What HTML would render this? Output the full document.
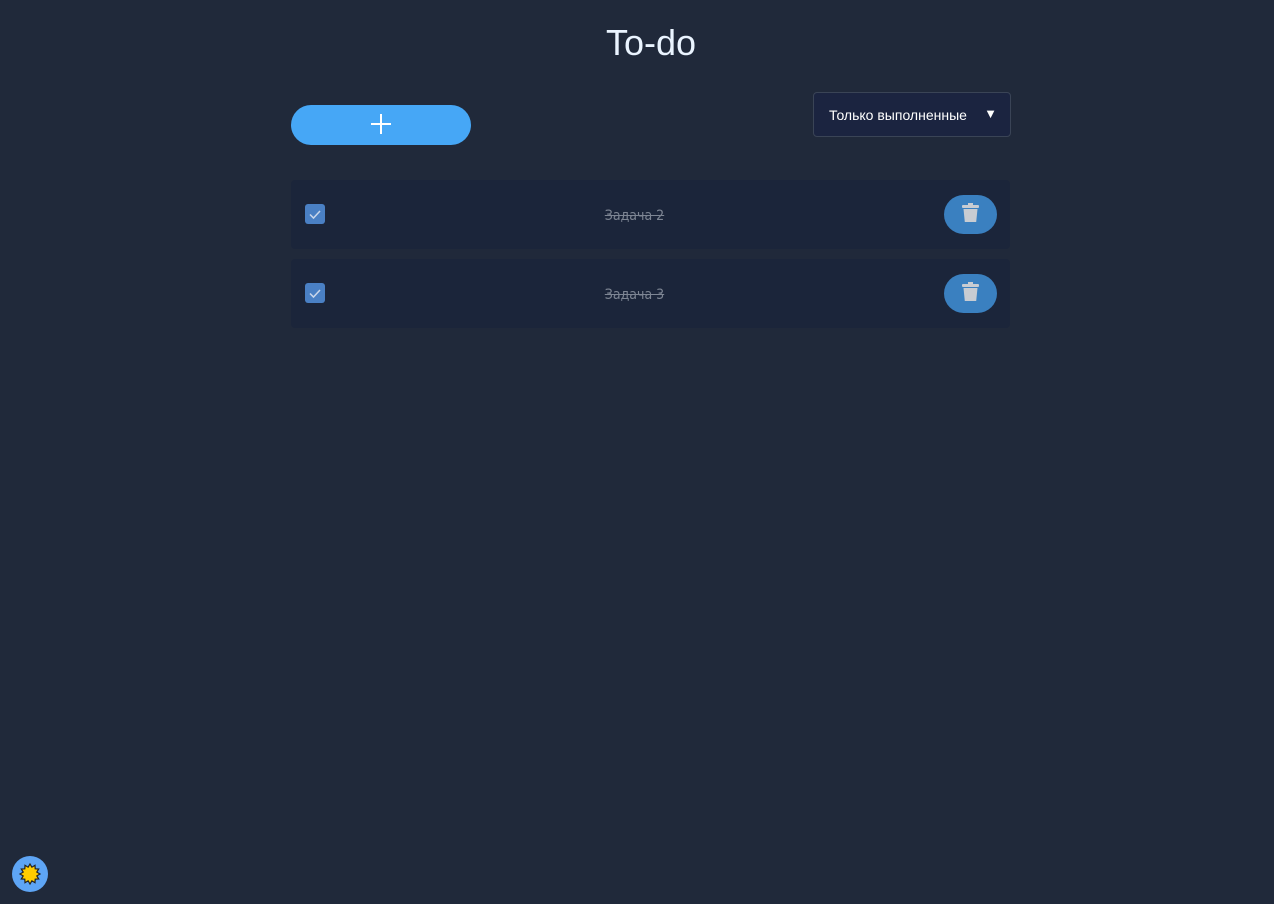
<!DOCTYPE html>
<html><head><meta charset="utf-8"><style>
*{box-sizing:border-box;margin:0;padding:0}
body{width:1274px;height:904px;background:#20293a;font-family:"Liberation Sans","DejaVu Sans",sans-serif;position:relative;overflow:hidden}
h1{position:absolute;left:0;width:1302px;top:22px;text-align:center;font-weight:normal;font-size:36px;color:#eaf4ff;font-family:"Liberation Sans",sans-serif}
.add{position:absolute;left:291px;top:105px;width:180px;height:40px;border-radius:20px;background:#46a7f6}
.add:before{content:"";position:absolute;left:89px;top:9px;width:2px;height:20px;background:#fff}
.add:after{content:"";position:absolute;left:80px;top:18px;width:20px;height:2px;background:#fff}
.sel{position:absolute;left:813px;top:92px;width:198px;height:45px;border:1px solid #3a4456;border-radius:4px;background:#1b2440;color:#fff;font-size:14px;line-height:45px;padding-left:15px}
.sel span{position:absolute;right:13px;top:-2px;font-size:13px}
.card{position:absolute;left:291px;width:719px;height:69px;background:#1b253a;border-radius:4px}
.cb{position:absolute;left:14px;top:24px;width:20px;height:20px;border-radius:3px;background:#4a80c4}
.txt{position:absolute;left:0;width:687px;top:0;line-height:73px;text-align:center;font-size:14px;color:#7d8593;text-decoration:line-through;font-family:"DejaVu Sans Condensed","Liberation Sans Narrow","Liberation Sans",sans-serif}
.del{position:absolute;left:653px;top:15px;width:53px;height:39px;border-radius:20px;background:#3a80c0}
.del svg{position:absolute;left:18px;top:8px}
.sun{position:absolute;left:12px;top:856px;width:36px;height:36px;border-radius:50%;background:#5ea5f5}
</style></head><body>
<h1>To-do</h1>
<div class="add"></div>
<div class="sel">Только выполненные<span>▼</span></div>
<div class="card" style="top:180px"><div class="cb"><svg width="20" height="20"><path d="M5 10.5l3.5 3.5 6.5-7" stroke="#c9d6ea" stroke-width="1.5" fill="none"/></svg></div><div class="txt">Задача 2</div><div class="del"><svg width="17" height="20"><rect x="6" y="0" width="5" height="2" fill="#c8ccd2"/><rect x="0" y="2" width="17" height="3" rx="1" fill="#c8ccd2"/><path d="M1.5 6h14l-1.3 13h-11.4z" fill="#c8ccd2"/></svg></div></div>
<div class="card" style="top:259px"><div class="cb"><svg width="20" height="20"><path d="M5 10.5l3.5 3.5 6.5-7" stroke="#c9d6ea" stroke-width="1.5" fill="none"/></svg></div><div class="txt">Задача 3</div><div class="del"><svg width="17" height="20"><rect x="6" y="0" width="5" height="2" fill="#c8ccd2"/><rect x="0" y="2" width="17" height="3" rx="1" fill="#c8ccd2"/><path d="M1.5 6h14l-1.3 13h-11.4z" fill="#c8ccd2"/></svg></div></div>
<div class="sun"><svg width="36" height="36" viewBox="0 0 36 36"><polygon fill="#ffcc00" stroke="#222" stroke-width="1.2" points="18,8 19.9,11.2 23,9.3 23.2,12.8 26.7,13 24.8,16.1 28,18 24.8,19.9 26.7,23 23.2,23.2 23,26.7 19.9,24.8 18,28 16.1,24.8 13,26.7 12.8,23.2 9.3,23 11.2,19.9 8,18 11.2,16.1 9.3,13 12.8,12.8 13,9.3 16.1,11.2"/></svg></div>
</body></html>
